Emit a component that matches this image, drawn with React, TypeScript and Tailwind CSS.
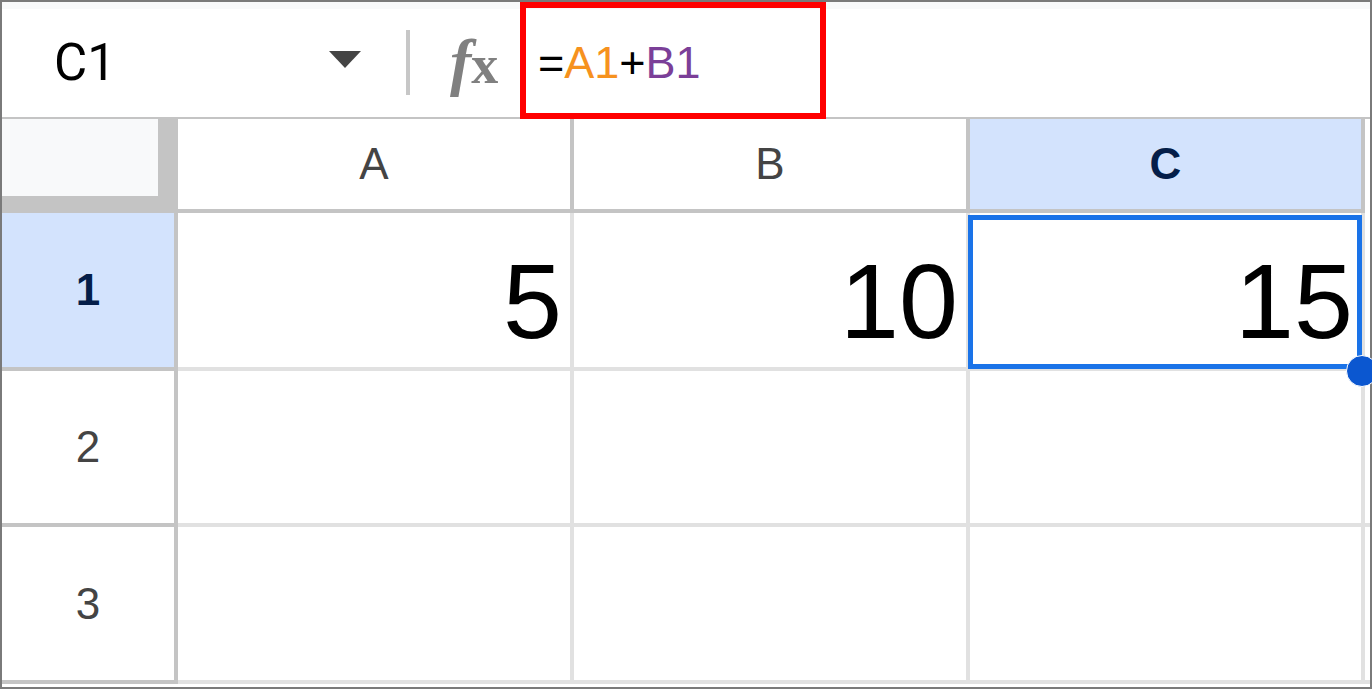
import React from 'react';

const sans = { fontFamily: '"Liberation Sans", Arial, sans-serif' };

const HeaderCell = ({ label, active }: { label: string; active?: boolean }) => (
  <div
    className={`flex items-center justify-center border-r-4 border-b-4 border-[#c4c4c4] text-[44px] leading-none ${
      active ? 'bg-[#d3e3fd] font-bold text-[#041e49]' : 'bg-white text-[#444444]'
    }`}
  >
    {label}
  </div>
);

const RowHeader = ({ label, active }: { label: string; active?: boolean }) => (
  <div
    className={`flex items-center justify-center border-r-4 border-b-4 border-[#c4c4c4] text-[44px] leading-none ${
      active ? 'bg-[#d3e3fd] font-bold text-[#041e49]' : 'bg-white text-[#444444]'
    }`}
  >
    {label}
  </div>
);

const Cell = ({ value, selected }: { value?: string; selected?: boolean }) => (
  <div className="relative flex items-end justify-end border-r-4 border-b-4 border-[#e1e1e1] bg-white pr-[8px] pb-[13px]">
    {value && <span className="text-[106px] leading-none text-black">{value}</span>}
    {selected && (
      <>
        <div className="pointer-events-none absolute -left-[2px] top-[2px] -right-[1px] bottom-[-2px] border-[5px] border-[#1a73e8]" />
        <div className="absolute -right-[17px] -bottom-[20px] z-10 h-[32px] w-[32px] rounded-full border border-white bg-[#0b57d0]" />
      </>
    )}
  </div>
);

export default function App() {
  return (
    <div className="h-[689px] w-[1372px] overflow-hidden bg-white" style={sans}>
      <div className="flex h-full w-full flex-col border-2 border-[#7a7a7a]">
        {/* formula bar */}
        <div className="relative flex h-[117px] shrink-0 flex-col border-b-2 border-[#c4c4c4]">
          <div className="h-[7px] bg-[#f8f9fa]" />
          <div className="flex flex-1 items-center pb-[2px]">
            <div
              className="w-[327px] pl-[52px] text-[51px] leading-none text-black"
              style={{ fontFamily: 'Roboto, "Liberation Sans", sans-serif' }}
            >
              C1
            </div>
            <svg width="32" height="17" viewBox="0 0 32 17" className="-mt-[6px]">
              <path d="M0 0 H32 L16 17 Z" fill="#444444" />
            </svg>
            <div className="ml-[45px] h-[65px] w-[4px] bg-[#c7c7c7]" />
            <div
              className="ml-[40px] flex w-[54px] items-baseline text-[#808080] leading-none"
              style={{ fontFamily: '"Liberation Serif", "Times New Roman", serif' }}
            >
              <span className="text-[64px] font-bold italic">f</span>
              <span className="text-[54px] font-bold">x</span>
            </div>
            <div className="ml-[34px] text-[45px] leading-none text-black">
              =<span className="text-[#f6921e]">A1</span>+<span className="text-[#7b3f98]">B1</span>
            </div>
          </div>
          <div className="pointer-events-none absolute left-[518px] top-0 bottom-[-2px] w-[306px] border-[6px] border-[#ff0000]" />
        </div>

        {/* grid */}
        <div className="grid flex-1 grid-cols-[176px_396px_396px_395px_1fr] grid-rows-[94px_158px_156px_157px_1fr]">
          <div className="bg-[#c4c4c4]">
            <div className="h-[77px] w-[156px] bg-[#f8f9fa]" />
          </div>
          <HeaderCell label="A" />
          <HeaderCell label="B" />
          <HeaderCell label="C" active />
          <div className="bg-white" />

          <RowHeader label="1" active />
          <Cell value="5" />
          <Cell value="10" />
          <Cell value="15" selected />
          <div className="border-b-4 border-[#e1e1e1] bg-white" />

          <RowHeader label="2" />
          <Cell />
          <Cell />
          <Cell />
          <div className="border-b-4 border-[#e1e1e1] bg-white" />

          <RowHeader label="3" />
          <Cell />
          <Cell />
          <Cell />
          <div className="border-b-4 border-[#e1e1e1] bg-white" />

          <div className="col-span-5 bg-white" />
        </div>
      </div>
    </div>
  );
}
